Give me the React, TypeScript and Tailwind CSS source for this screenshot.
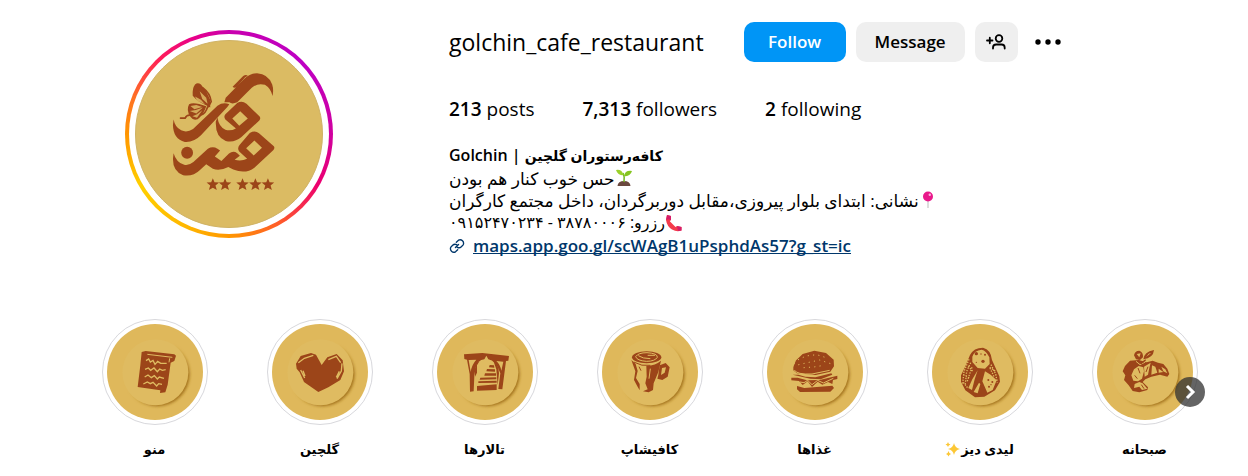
import React from "react";

const INK = "#9c4519";

function Star({ x, y }: { x: number; y: number }) {
  return <path transform={`translate(${x} ${y})`} d="M0-19 5-7 19-6 8 3 12 17 0 10-12 17-8 3-19-6-5-7Z" />;
}

function CafeLogo() {
  return (
    <svg viewBox="45 45 564 564" className="size-full" fill={INK} aria-hidden="true">
      <g transform="translate(120 105)">
        <path d="M193 126 197 112 252 56Q270 38 292 38 326 40 338 72 343 88 339 107 334 84 316 73 294 66 276 82L232 126Q216 133 208 126Z" />
        <path d="M218 79 250 46Q258 41 264 45L256 50 232 78Q224 85 218 79Z" />
        <path d="M39 178Q43 201 62 211 80 219 98 207L172 136Q190 124 208 132L202 140 122 226Q100 248 73 246 38 238 37 195Z" />
        <path fillRule="evenodd" d="M232 128Q246 120 260 130L300 169Q304 175 299 181L244 232Q224 249 197 243 165 231 167 184L172 172Q176 200 196 209 212 214 228 205L196 178Q190 170 196 162ZM241 153 217 175 238 197 264 175Z" />
        <path fillRule="evenodd" d="M270 219Q286 210 298 220L343 259Q347 265 341 271L284 324Q258 344 220 330L205 322Q177 336 158 327L138 314 119 331Q98 352 68 347 37 336 37 298L39 280Q47 308 71 315 86 318 99 307L143 267Q158 258 172 267L180 272 164 290 184 304 207 281Q220 271 232 280L240 288 224 300Q244 306 262 297L238 275Q231 265 239 255ZM284 242 259 265 282 287 307 264Z" />
        <circle cx="80" cy="279" r="18" />
        <path d="M104 72Q112 64 122 72 140 92 150 118L150 142 136 134Q112 124 97 106 95 84 104 72Z" />
        <path d="M86 132Q100 124 138 138 130 164 112 177 98 182 90 170 76 150 86 132Z" />
        <path d="M118 92 138 112 142 130 126 116ZM104 108 122 118 134 132 110 121ZM90 137 108 134 126 140 102 147ZM88 152 106 149 128 142 108 160ZM96 168 110 162 126 150 110 173Z" fill="#d3a959" />
        <path d="M128 82Q150 98 153 124L144 140M90 165Q78 164 74 174L60 174M142 140Q136 160 122 164" fill="none" stroke={INK} strokeWidth="5" strokeLinecap="round" />
        <Star x={158} y={375} />
        <Star x={195} y={375} />
        <Star x={248} y={375} />
        <Star x={287} y={375} />
        <Star x={325} y={375} />
      </g>
    </svg>
  );
}

function MenuArt() {
  return (
    <>
      <path fill={INK} d="M140 126 152 123 238 133 243 137 238 153 227 158 218 224 211 247 195 249 196 241 128 231 136 166Z" />
      <g fill="none" stroke="#dfbb61" strokeWidth="4">
        <path d="M157 133 232 142M224 145 222 157" strokeWidth="3" />
        <path d="M153 152 161 147 166 156 174 151 180 163 188 154 197 160 215 160M150 178 160 174 167 181 177 174 187 185 194 177 202 181 212 179M149 201 159 195 169 203 178 197 187 207 193 201 207 205M145 222 157 216 166 221 174 217 185 228 191 221 201 223" />
      </g>
    </>
  );
}

function HeartArt() {
  return (
    <g transform="translate(-495 0)">
      <path fill={INK} d="M603 161 617 138 648 129 663 134 680 165 697 142 725 132 743 151 747 184 736 210 700 232 670 246 627 216 614 187 605 176Z" />
      <path
        fill="none"
        stroke="#dfbb61"
        strokeWidth="4"
        d="M610 158 628 145 655 136M617 180 629 204M624 182 630 198M700 149 724 139 737 158M741 160 739 183 726 206M733 184 724 202"
      />
    </g>
  );
}

function HallArt() {
  return (
    <g fill={INK}>
      <path fillRule="evenodd" d="M117 133 172 129 252 138 250 152 243 153 232 238 220 237 226 190Q212 150 190 148L184 137 178 148Q158 150 152 172L148 198 146 244 135 245 134 192 126 149 118 147ZM131 150 137 186Q140 164 154 149ZM214 153Q226 164 229 182L235 155Z" />
      <path d="M194 165 207 166 208 173 192 172ZM186 177 210 178 210 185 184 184ZM180 190 213 190 213 197 178 197ZM166 203 214 202 214 208 164 209ZM160 214 215 212 215 218 160 219ZM156 228 215 223 215 240 156 242Z" />
      <path d="M204 150Q220 160 222 190L218 226 214 178ZM150 176Q152 158 164 152L156 166 156 188 150 200Z" />
    </g>
  );
}

function CupArt() {
  return (
    <g transform="translate(-495 0)">
      <ellipse cx="665" cy="142" rx="44" ry="18" fill={INK} />
      <path fill="none" stroke="#dfbb61" strokeWidth="3" d="M632 140Q640 128 666 128 698 130 697 142 690 154 664 154 636 152 632 140M640 137Q652 146 676 146M668 136 690 136" />
      <path fill={INK} d="M619 150 632 162 638 183 633 204 644 222 644 241 637 229 627 210 631 184ZM664 168Q692 166 708 152L700 186 686 220 684 240 671 247 654 244 668 238 661 220 665 200Z" />
      <path fill={INK} fillRule="evenodd" d="M704 166 722 159 734 172 728 200 712 210 697 206 700 194ZM711 174 708 195 719 188 723 172Z" />
      <path fill="none" stroke={INK} strokeWidth="3" d="M626 156Q650 170 676 166M642 170 648 182" />
      <path fill="none" stroke="#dfbb61" strokeWidth="3" d="M676 176 672 206" />
    </g>
  );
}

function BurgerArt() {
  return (
    <>
      <path fill={INK} d="M115 172 121 153 143 132 178 122 213 129 236 149 237 169 226 185 182 195 126 190 115 181ZM113 194 130 194 151 200 181 202 229 190 232 194 197 208 166 206ZM109 203 128 203 156 211 194 210 247 197 247 207 234 210 232 222 219 216 202 224 188 215 171 231 158 214 143 225 132 213 109 211ZM126 228 148 234 232 227 237 234 226 245 135 246 126 238Z" />
      <path fill="none" stroke="#dfbb61" strokeWidth="3" d="M118 180Q125 194 171 192L224 181M117 163 121 151M135 216 147 218 158 211 171 224 188 211 205 219 235 205" />
      <path fill="none" stroke="#dfbb61" strokeWidth="3" strokeLinecap="round" strokeDasharray="1 15" d="M130 149 153 138 185 134 220 145M131 164 162 157 194 150 227 161M147 173 176 171 207 166" />
    </>
  );
}

function LadyArt() {
  return (
    <g transform="translate(-495 0)">
      <path fill={INK} d="M645 135Q656 113 684 113 708 119 711 150L733 199 735 215 720 241 688 260 660 262 631 241 618 215 618 196 630 171Z" />
      <path fill="#dfbb61" d="M652 140Q658 121 680 119 694 122 703 142L704 162 690 176 668 174 652 156ZM668 181 659 208 651 240 640 234 652 208ZM690 184 707 194 725 211 713 240 697 248 682 214ZM656 246 672 218 676 222 668 250Z" />
      <path fill="none" stroke="#dfbb61" strokeWidth="4" strokeDasharray="4 4" d="M642 148 627 184 623 221M647 158 635 184 631 222M651 172 644 192 636 216M708 164 722 192 727 218M705 174 718 202M640 168 653 184M625 194 645 205M704 172 722 184M625 217 640 236" />
      <g fill={INK}>
        <circle cx="664" cy="131" r="5" /><circle cx="684" cy="154" r="5" /><circle cx="690" cy="134" r="3" />
        <circle cx="664" cy="157" r="2" /><circle cx="678" cy="132" r="2" /><circle cx="700" cy="210" r="3" /><circle cx="712" cy="216" r="3" /><circle cx="702" cy="230" r="3" /><circle cx="708" cy="224" r="2" />
      </g>
    </g>
  );
}

function CroissantArt() {
  return (
    <g transform="translate(-15 0)">
      <path fill={INK} d="M128 184 135 168 150 152 176 150 200 157 218 152 234 158 250 162 262 176 268 192 262 200 240 194 214 200 196 208 188 216 204 232 202 240 178 247 158 243 146 226 132 210 136 196Z" />
      <path fill="#dfbb61" d="M162 178 176 168 190 172 192 184 186 206 174 214 160 212 154 196ZM192 170 212 158 208 174 204 194 194 200ZM216 166 226 170 232 188 214 194ZM236 176 250 186 236 188ZM244 170 256 178 262 190 250 184ZM164 222 178 216 188 220 202 236 186 240 178 230 162 234Z" />
      <path fill="none" stroke={INK} strokeWidth="3" d="M174 174 180 190M204 170 198 186M184 224 192 236M164 196 172 206" />
      <path fill={INK} fillRule="evenodd" d="M162 136Q164 122 178 122 190 126 189 142L180 150 168 148ZM170 132 182 130 178 142ZM190 148Q192 126 222 120 220 144 190 148ZM198 141 214 128 206 131Z" />
      <path fill="none" stroke="#dfbb61" strokeWidth="3" d="M168 154 180 164 196 156" />
      <path fill="none" stroke={INK} strokeWidth="4" d="M174 150 184 160 197 149" />
    </g>
  );
}

function Sprout() {
  return (
    <svg viewBox="0 0 18 18" className="size-[18px]" role="img" aria-label="seedling">
      <path d="M2.5 17Q3 12 9 12T15.5 17Z" fill="#6b493f" />
      <path d="M9 13Q10 8 8 4" fill="none" stroke="#77b82a" strokeWidth="1.6" />
      <path d="M8.5 6Q3 7 1 1 7 0 8.5 6Z" fill="#9bd12c" />
      <path d="M9 7Q10 1 17 2 15 8 9 7Z" fill="#86c520" />
    </svg>
  );
}

function Pin() {
  return (
    <svg viewBox="0 0 18 18" className="size-[18px]" role="img" aria-label="pin">
      <path d="M9 9v8" stroke="#c9c9c9" strokeWidth="1.3" />
      <circle cx="9" cy="5.5" r="5" fill="#e9198b" />
      <circle cx="10.8" cy="3.7" r="1.2" fill="#ffb1dc" />
    </svg>
  );
}

function Phone() {
  return (
    <svg viewBox="0 0 18 18" className="size-[18px]" role="img" aria-label="phone">
      <path d="M2 1 6 2 6 6 4.8 7.2 10.5 13 12 12 16.5 13 16.5 16.5Q12 18.5 7 15.5T1 6Z" fill="#f43b4b" />
      <path d="M2 1 6 2 6 6 3 5.2 1 6ZM12 12 16.5 13 16.5 16.5 13 17Z" fill="#d51d69" />
    </svg>
  );
}

function Sparkles() {
  return (
    <svg viewBox="0 0 16 16" className="size-4" role="img" aria-label="sparkles" fill="#fcc735">
      <path d="M9 2Q10 7 15 8 10 9 9 14 8 9 3 8 8 7 9 2ZM3 1Q3.4 3 5.5 3.5 3.4 4 3 6 2.6 4 .5 3.5 2.6 3 3 1ZM3.5 10Q4 12.5 6 13 4 13.5 3.5 15.5 3 13.5 1 13 3 12.5 3.5 10Z" />
    </svg>
  );
}

const highlights: { label: string; art: React.ReactNode; sparkle?: boolean }[] = [
  { label: "منو", art: <MenuArt /> },
  { label: "گلچین", art: <HeartArt /> },
  { label: "تالارها", art: <HallArt /> },
  { label: "کافیشاپ", art: <CupArt /> },
  { label: "غذاها", art: <BurgerArt /> },
  { label: "لیدی دیز", art: <LadyArt />, sparkle: true },
  { label: "صبحانه", art: <CroissantArt /> },
];

const stats = [
  { value: "213", label: "posts" },
  { value: "7,313", label: "followers" },
  { value: "2", label: "following" },
];

export default function App() {
  return (
    <main className="bg-white pb-3 font-['Open_Sans','Noto_Sans','DejaVu_Sans',sans-serif] text-black">
      <header className="flex items-start gap-[116px] pl-[125px] pt-[22px]">
        <a
          href="#story"
          aria-label="View story"
          className="mt-2 size-52 shrink-0 rounded-full bg-[conic-gradient(#c900ae,#bd00c5_45deg,#d0009f_90deg,#ed006e_120deg,#ff5a2a_150deg,#ff9700_180deg,#ffb700_205deg,#ffd000_240deg,#ff9500_270deg,#ff7321_290deg,#ff1c59_318deg,#e8008a_340deg,#c900ae)] p-1"
        >
          <span className="block size-full rounded-full bg-white p-1.5">
            <span className="block size-full overflow-hidden rounded-full border border-[#cfb264] bg-[#dbbb63]">
              <CafeLogo />
            </span>
          </span>
        </a>

        <section className="min-w-0">
          <div className="flex h-10 items-center">
            <h1 className="mr-10 text-[23px] leading-10">golchin_cafe_restaurant</h1>
            <div className="flex items-center gap-2.5">
              <button className="h-10 w-[102px] rounded-[10px] bg-[#0095f6] text-[17px] font-semibold text-white">Follow</button>
              <button className="h-10 w-[109px] rounded-[10px] bg-[#efefef] text-[17px] font-semibold">Message</button>
              <button aria-label="Similar accounts" className="flex h-10 w-[43px] items-center justify-center rounded-[10px] bg-[#efefef]">
                <svg viewBox="0 0 20 16" className="h-4 w-5" fill="none" stroke="currentColor" strokeWidth="1.8" strokeLinecap="round">
                  <circle cx="13" cy="4.5" r="3.3" />
                  <path d="M7 14.5v-.8q0-3.200 3.200-3.200h5.300q3.200 0 3.200 3.200v.8M1 6.500h5.500M3.800 3.700v5.600" />
                </svg>
              </button>
            </div>
            <button aria-label="Options" className="flex h-10 w-[60px] items-center justify-center">
              <svg viewBox="0 0 28 6" className="h-1.5 w-7">
                <circle cx="4" cy="3" r="2.7" /><circle cx="14" cy="3" r="2.7" /><circle cx="24" cy="3" r="2.7" />
              </svg>
            </button>
          </div>

          <ul className="mt-8 flex gap-12 text-[19px] leading-[30px]">
            {stats.map((s) => (
              <li key={s.label}>
                <span className="font-semibold">{s.value}</span> {s.label}
              </li>
            ))}
          </ul>

          <div className="mt-5 flex flex-col items-start text-[17px] leading-[23px]">
            <h2 className="h-[23px] whitespace-nowrap text-[16px] font-semibold">
              Golchin | <span className="text-[14px]">کافه‌رستوران گلچین</span>
            </h2>
            <p dir="rtl" className="flex h-[22px] items-center whitespace-nowrap"><Sprout />حس خوب کنار هم بودن</p>
            <p dir="rtl" className="flex h-[22px] items-center whitespace-nowrap"><Pin />نشانی: ابتدای بلوار پیروزی،مقابل دوربرگردان، داخل مجتمع کارگران</p>
            <p dir="rtl" className="flex h-[23px] items-center whitespace-nowrap text-[16px]"><Phone />رزرو: ۳۸۷۸۰۰۰۶ - ۰۹۱۵۲۴۷۰۲۳۴</p>
            <a href="#maps" className="flex items-center gap-2 font-semibold text-[#00376b]">
              <svg viewBox="0 0 24 24" className="size-4" fill="none" stroke="currentColor" strokeWidth="2" strokeLinecap="round">
                <path d="m9.700 14.300 4.600-4.600M11 6.500l3.200-3.200a5.200 5.200 0 0 1 7 7L18.500 13a5.200 5.200 0 0 1-6 1M13 17.500l-3.200 3.200a5.200 5.200 0 0 1-7-7L5.500 11a5.200 5.200 0 0 1 6-1" />
              </svg>
              <span className="underline [text-decoration-skip-ink:none]">maps.app.goo.gl/scWAgB1uPsphdAs57?g_st=ic</span>
            </a>
          </div>
        </section>
      </header>

      <section aria-label="Highlights" className="relative mt-[62px] pl-[72px] pr-[21px]">
        <ul className="grid grid-cols-7">
          {highlights.map((h) => (
            <li key={h.label}>
              <a href="#highlight" className="flex flex-col items-center">
                <span className="size-[106px] rounded-full border border-[#d8d8dc] p-1">
                  <span className="block size-full overflow-hidden rounded-full bg-[#dfb85b]">
                    <svg viewBox="36 42 288 288" className="size-full" aria-hidden="true">
                      <defs>
                        <linearGradient id="rim" x1="0" y1="0" x2="1" y2="1">
                          <stop offset=".4" stopColor="#a06f18" stopOpacity="0" />
                          <stop offset=".75" stopColor="#a06f18" />
                        </linearGradient>
                        <filter id="soft" x="-20%" y="-20%" width="140%" height="140%">
                          <feGaussianBlur stdDeviation="5" />
                        </filter>
                      </defs>
                      <circle cx="186" cy="191" r="98" fill="url(#rim)" filter="url(#soft)" />
                      <circle cx="181" cy="187" r="99" fill="#dfbb61" />
                      {h.art}
                    </svg>
                  </span>
                </span>
                <span dir="rtl" className="mt-3 flex h-6 items-center whitespace-nowrap text-[13px] font-semibold leading-6">
                  {h.label}
                  {h.sparkle && <Sparkles />}
                </span>
              </a>
            </li>
          ))}
        </ul>
        <button aria-label="Next" className="absolute right-[43px] top-[58px] flex size-[30px] items-center justify-center rounded-full bg-[#303030]/75">
          <svg viewBox="0 0 12 16" className="h-4 w-3" fill="none" stroke="white" strokeWidth="3">
            <path d="m3 2 6 6-6 6" />
          </svg>
        </button>
      </section>
    </main>
  );
}
